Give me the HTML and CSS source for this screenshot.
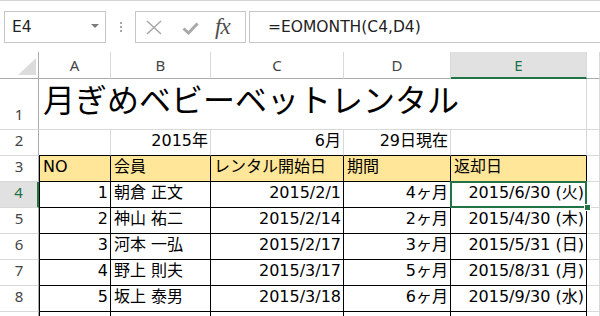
FILE: index.html
```html
<!DOCTYPE html>
<html lang="ja">
<head>
<meta charset="utf-8">
<title>月ぎめベビーベットレンタル</title>
<link rel="stylesheet" href="styles.css">
</head>
<body>
<div class="toolbar">
  <div class="namebox"><span>E4</span><span class="caret"></span></div>
  <div class="vdots"><i></i><i></i><i></i></div>
  <div class="fxbox">
    <svg class="ic-x" width="16" height="15" viewBox="0 0 16 15"><path d="M1 1 L15 14 M15 1 L1 14" stroke="#a9a9a9" stroke-width="1.6" fill="none"/></svg>
    <svg class="ic-ok" width="17" height="13" viewBox="0 0 17 13"><path d="M1.5 6.5 L6.5 11 L15.5 1.5" stroke="#a9a9a9" stroke-width="3" fill="none"/></svg>
    <span class="fx"><i>f</i><i>x</i></span>
  </div>
  <div class="formula">=EOMONTH(C4,D4)</div>
</div>
<div class="sheet">
  <div class="corner"></div>
  <div class="ch">A</div><div class="ch">B</div><div class="ch">C</div><div class="ch">D</div><div class="ch ch-sel">E</div><div class="ch"></div>

  <div class="rh">1</div>
  <div class="c title">月ぎめベビーベットレンタル</div>
  <div class="c"></div>

  <div class="rh">2</div>
  <div class="c tt"></div><div class="c tt r">2015年</div><div class="c tt r">6月</div><div class="c tt r">29日現在</div><div class="c tt"></div><div class="c"></div>

  <div class="rh">3</div>
  <div class="c t tl hd">NO</div><div class="c t hd">会員</div><div class="c t hd">レンタル開始日</div><div class="c t hd">期間</div><div class="c t hd">返却日</div><div class="c"></div>

  <div class="rh rh-sel">4</div>
  <div class="c t tl r">1</div><div class="c t">朝倉 正文</div><div class="c t r">2015/2/1</div><div class="c t r">4ヶ月</div><div class="c t r sel">2015/6/30 (火)<span class="selbox"></span><span class="handle"></span></div><div class="c"></div>

  <div class="rh">5</div>
  <div class="c t tl r">2</div><div class="c t">神山 祐二</div><div class="c t r">2015/2/14</div><div class="c t r">2ヶ月</div><div class="c t r">2015/4/30 (木)</div><div class="c"></div>

  <div class="rh">6</div>
  <div class="c t tl r">3</div><div class="c t">河本 一弘</div><div class="c t r">2015/2/17</div><div class="c t r">3ヶ月</div><div class="c t r">2015/5/31 (日)</div><div class="c"></div>

  <div class="rh">7</div>
  <div class="c t tl r">4</div><div class="c t">野上 則夫</div><div class="c t r">2015/3/17</div><div class="c t r">5ヶ月</div><div class="c t r">2015/8/31 (月)</div><div class="c"></div>

  <div class="rh">8</div>
  <div class="c t tl r">5</div><div class="c t">坂上 泰男</div><div class="c t r">2015/3/18</div><div class="c t r">6ヶ月</div><div class="c t r">2015/9/30 (水)</div><div class="c"></div>

  <div class="rh"></div>
  <div class="c t tl r"></div><div class="c t"></div><div class="c t r"></div><div class="c t r"></div><div class="c t r"></div><div class="c"></div>
</div>
</body>
</html>
```
FILE: styles.css
```css
html, body {
  margin: 0;
  padding: 0;
  background: #fff;
  overflow: hidden;
}
body {
  font-family: "DejaVu Sans", "Noto Sans CJK JP", sans-serif;
  color: #000;
}

/* formula bar */
.toolbar {
  height: 52px;
  box-sizing: border-box;
  border-top: 1px solid #d5d5d5;
  display: flex;
  align-items: flex-start;
  padding: 10px 0 0 4px;
}
.namebox {
  width: 102px;
  height: 32px;
  box-sizing: border-box;
  border: 1px solid #c6c6c6;
  display: flex;
  align-items: center;
  justify-content: space-between;
  padding: 0 6px 0 7px;
  font: 15.5px "DejaVu Sans", sans-serif;
  color: #222;
}
.caret {
  width: 0;
  height: 0;
  border-left: 4px solid transparent;
  border-right: 4px solid transparent;
  border-top: 4px solid #7a7a7a;
  margin-top: -2px;
}
.vdots {
  width: 29px;
  height: 32px;
  display: flex;
  flex-direction: column;
  align-items: center;
  justify-content: center;
  gap: 2px;
}
.vdots i {
  width: 2px;
  height: 2px;
  background: #a6a6a6;
}
.fxbox {
  width: 111px;
  height: 32px;
  box-sizing: border-box;
  border: 1px solid #c6c6c6;
  display: flex;
  align-items: center;
  padding-left: 10px;
}
.ic-x { margin-top: 1px; }
.ic-ok { margin-left: 20px; margin-top: 2px; }
.fx {
  margin-left: 16px;
  font: italic 23px "Liberation Serif", serif;
  color: #4d4d4d;
  letter-spacing: -1px;
}
.fx i { font-style: italic; }
.formula {
  flex: 1;
  height: 32px;
  box-sizing: border-box;
  margin-left: 3px;
  border: 1px solid #c6c6c6;
  border-right: none;
  padding-left: 18px;
  display: flex;
  align-items: center;
  font: 15.5px "DejaVu Sans", sans-serif;
  color: #222;
}

/* sheet */
.sheet {
  display: grid;
  grid-template-columns: 39px 72px 100px 133px 107px 136px 1fr;
  grid-template-rows: 27px 51px repeat(8, 26px);
}
.sheet > div {
  box-sizing: border-box;
  border-right: 1px solid #d9d9d9;
  border-bottom: 1px solid #d9d9d9;
  min-width: 0;
}
.corner {
  position: relative;
  border-right-color: #ababab !important;
  border-bottom-color: #ababab !important;
}
.corner::after {
  content: "";
  position: absolute;
  right: 2px;
  bottom: 3px;
  width: 0;
  height: 0;
  border-left: 18px solid transparent;
  border-bottom: 17px solid #dcdcdc;
}
.ch {
  display: flex;
  align-items: center;
  justify-content: center;
  border-bottom-color: #ababab !important;
  font: 15px "Noto Sans", sans-serif;
  color: #444;
}
.ch-sel {
  background: #e1e1e1;
  color: #217346;
  border-bottom: 2px solid #217346 !important;
}
.rh {
  display: flex;
  align-items: flex-end;
  justify-content: center;
  border-right-color: #ababab !important;
  font: 15px/15px "Noto Sans", sans-serif;
  color: #444;
  padding-bottom: 7px;
}
.rh-sel {
  background: #e1e1e1;
  color: #217346;
  border-right: 2px solid #217346 !important;
}
.c {
  display: flex;
  align-items: flex-end;
  padding: 0 3px 6px 3px;
  font-size: 16px;
  line-height: 16px;
  white-space: nowrap;
}
.r { justify-content: flex-end; padding-right: 2px; }
.title {
  grid-column: span 5;
  font-family: "Noto Sans CJK JP", sans-serif;
  font-size: 32px;
  line-height: 32px;
  padding-left: 4px;
  padding-bottom: 15px;
}
.tt { border-bottom-color: #000 !important; }
.t {
  border-right-color: #000 !important;
  border-bottom-color: #000 !important;
}
.tl { border-left: 1px solid #000; }
.hd { background: #ffe699; }
.sel {
  position: relative;
  overflow: visible;
}
.selbox {
  position: absolute;
  top: -1px;
  left: -1px;
  right: -1px;
  bottom: -1px;
  border: 2px solid #217346;
  z-index: 2;
}
.handle {
  position: absolute;
  right: -5px;
  bottom: -4px;
  width: 7px;
  height: 7px;
  box-sizing: border-box;
  background: #217346;
  border: 1px solid #fff;
  z-index: 3;
}
```
